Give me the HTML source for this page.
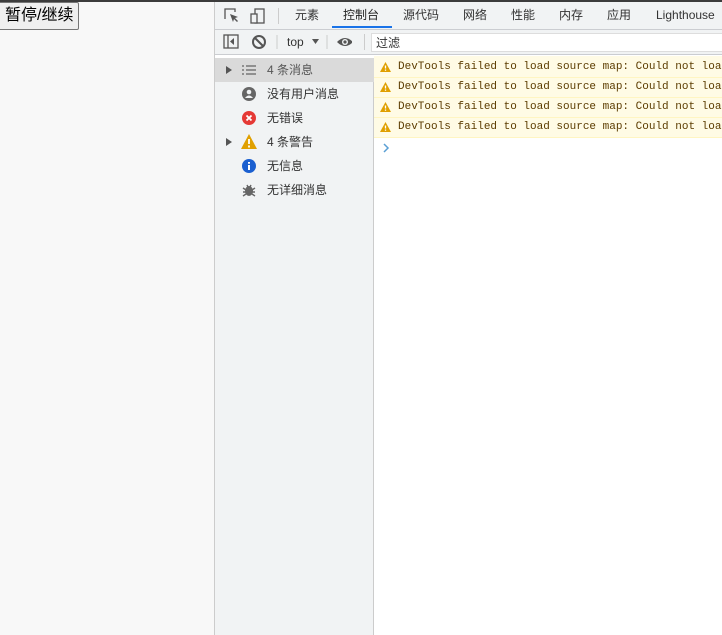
<!DOCTYPE html><html><head><style>
body{margin:0;width:722px;height:635px;overflow:hidden;background:#f8f8f8;font-family:"Liberation Sans","Noto Sans CJK SC",sans-serif;position:relative}
.a{position:absolute}
.btn{left:0;top:2px;height:26px;padding:0 5px;border:1px solid #767676;border-left:none;background:#efefef;font-size:16px;line-height:25px;color:#000;border-radius:0 2px 2px 0}
.tab{top:2px;height:27px;line-height:27px;font-size:12px;color:#333}
.side div{position:absolute;left:0;width:159px;height:24px;line-height:24px;font-size:12px;color:#333}
.side span{position:absolute;left:52px}
.row{left:374px;width:348px;height:19px;background:#fffbe5;border-bottom:1px solid #fff5c2;font-family:"Liberation Mono",monospace;font-size:11px;line-height:19px;color:#5c3c00;white-space:nowrap;overflow:hidden}
</style></head><body>
<div class="a" style="left:0;top:0;width:722px;height:2px;background:#3c3c3c"></div>
<div class="a btn">暂停/继续</div>
<div class="a" style="left:214px;top:2px;width:508px;height:633px;background:#fff;border-left:1px solid #ccc"></div>
<div class="a" style="left:215px;top:2px;width:507px;height:27px;background:#f1f3f4;border-bottom:1px solid #cbcdd1"></div>
<svg class="a" style="left:222px;top:6px" width="50" height="20"><path d="M3 13V3h10v3" fill="none" stroke="#555" stroke-width="1.3"/><path d="M8 8l8 3-3 1 3 3-1 1-3-3-1 3z" fill="#555"/><rect x="33" y="3" width="9" height="14" fill="none" stroke="#555" stroke-width="1.3"/><rect x="29" y="8" width="6" height="9" fill="#f1f3f4" stroke="#555" stroke-width="1.3"/></svg>
<div class="a" style="left:278px;top:8px;width:1px;height:16px;background:#ccc"></div>
<div class="a tab" style="left:295px">元素</div>
<div class="a tab" style="left:343px;color:#222">控制台</div>
<div class="a" style="left:332px;top:26px;width:60px;height:2px;background:#1a73e8"></div>
<div class="a tab" style="left:403px">源代码</div>
<div class="a tab" style="left:463px">网络</div>
<div class="a tab" style="left:511px">性能</div>
<div class="a tab" style="left:559px">内存</div>
<div class="a tab" style="left:607px">应用</div>
<div class="a tab" style="left:656px">Lighthouse</div>
<div class="a" style="left:215px;top:30px;width:507px;height:24px;background:#f1f3f4;border-bottom:1px solid #cbcdd1"></div>
<svg class="a" style="left:222px;top:33px" width="130" height="18"><rect x="2" y="2" width="14" height="13" fill="none" stroke="#555" stroke-width="1.3"/><line x1="6" y1="2" x2="6" y2="15" stroke="#555" stroke-width="1.3"/><path d="M12 5v7l-4-3.5z" fill="#555"/><circle cx="37" cy="9" r="6" fill="none" stroke="#555" stroke-width="2"/><line x1="33" y1="5" x2="41" y2="13" stroke="#555" stroke-width="2"/><line x1="55" y1="2" x2="55" y2="16" stroke="#ccc"/><path d="M90 6h7l-3.5 5z" fill="#555"/><line x1="105" y1="2" x2="105" y2="16" stroke="#ccc"/><path d="M115 9q8-8 16 0q-8 8-16 0z" fill="#555"/><circle cx="123" cy="9" r="3" fill="#f1f3f4"/><circle cx="123" cy="9" r="1.6" fill="#555"/></svg>
<div class="a" style="left:287px;top:30px;line-height:25px;font-size:12px;color:#333">top</div>
<div class="a" style="left:364px;top:34px;width:1px;height:16px;background:#ccc"></div>
<div class="a" style="left:371px;top:33px;width:351px;height:19px;background:#fff;border:1px solid #ddd;border-right:none;font-size:12px;line-height:19px;color:#333;box-sizing:border-box;padding-left:4px">过滤</div>
<div class="a side" style="left:215px;top:58px;width:158px;height:577px;background:#f1f3f4;border-right:1px solid #ccc">
<div style="top:0;background:#dadada"><svg class="a" style="left:11px;top:8px" width="6" height="8"><path d="M0 0l6 4-6 4z" fill="#555"/></svg><svg class="a" style="left:27px;top:7px" width="14" height="10"><path d="M0 1h2M4 1h10M0 5h2M4 5h10M0 9h2M4 9h10" stroke="#777" stroke-width="1.6"/></svg><span style="color:#555">4 条消息</span></div>
<div style="top:24px"><svg class="a" style="left:27px;top:5px" width="14" height="14"><circle cx="7" cy="7" r="7" fill="#666"/><circle cx="7" cy="5" r="2.3" fill="#f1f3f4"/><path d="M3 11q4-5 8 0" fill="#f1f3f4"/></svg><span>没有用户消息</span></div>
<div style="top:48px"><svg class="a" style="left:27px;top:5px" width="14" height="14"><circle cx="7" cy="7" r="7" fill="#e53935"/><path d="M4.5 4.5l5 5M9.5 4.5l-5 5" stroke="#fff" stroke-width="1.8"/></svg><span>无错误</span></div>
<div style="top:72px"><svg class="a" style="left:11px;top:8px" width="6" height="8"><path d="M0 0l6 4-6 4z" fill="#555"/></svg><svg class="a" style="left:26px;top:4px" width="16" height="15"><path d="M8 0l8 15H0z" fill="#e0a000"/><path d="M8 5v5M8 11.5v2" stroke="#fff" stroke-width="1.8"/></svg><span>4 条警告</span></div>
<div style="top:96px"><svg class="a" style="left:27px;top:5px" width="14" height="14"><circle cx="7" cy="7" r="7" fill="#1a5fd0"/><path d="M7 6v5M7 3v1.8" stroke="#fff" stroke-width="2"/></svg><span>无信息</span></div>
<div style="top:120px"><svg class="a" style="left:27px;top:5px" width="14" height="14"><ellipse cx="7" cy="8" rx="4" ry="5" fill="#666"/><path d="M1 5l3 2M13 5l-3 2M1 9h3M13 9h-3M1 13l3-2M13 13l-3-2M5 2l1 2M9 2l-1 2" stroke="#666" stroke-width="1.4"/></svg><span>无详细消息</span></div>
</div>
<div class="a" style="left:374px;top:56px;width:348px;height:3px;background:#fffbe5;border-bottom:1px solid #fff5c2"></div>
<div class="a row" style="top:58px"><svg style="position:absolute;left:6px;top:4px" width="11" height="10"><path d="M5.5 0l5.5 10H0z" fill="#e0a000"/><path d="M5.5 3.5v3M5.5 7.5v1.3" stroke="#fff" stroke-width="1.3"/></svg><span style="position:absolute;left:24px">DevTools failed to load source map: Could not load</span></div>
<div class="a row" style="top:78px"><svg style="position:absolute;left:6px;top:4px" width="11" height="10"><path d="M5.5 0l5.5 10H0z" fill="#e0a000"/><path d="M5.5 3.5v3M5.5 7.5v1.3" stroke="#fff" stroke-width="1.3"/></svg><span style="position:absolute;left:24px">DevTools failed to load source map: Could not load</span></div>
<div class="a row" style="top:98px"><svg style="position:absolute;left:6px;top:4px" width="11" height="10"><path d="M5.5 0l5.5 10H0z" fill="#e0a000"/><path d="M5.5 3.5v3M5.5 7.5v1.3" stroke="#fff" stroke-width="1.3"/></svg><span style="position:absolute;left:24px">DevTools failed to load source map: Could not load</span></div>
<div class="a row" style="top:118px"><svg style="position:absolute;left:6px;top:4px" width="11" height="10"><path d="M5.5 0l5.5 10H0z" fill="#e0a000"/><path d="M5.5 3.5v3M5.5 7.5v1.3" stroke="#fff" stroke-width="1.3"/></svg><span style="position:absolute;left:24px">DevTools failed to load source map: Could not load</span></div>
<svg class="a" style="left:382px;top:143px" width="8" height="10"><path d="M2 1l4 4-4 4" fill="none" stroke="#5a9fd4" stroke-width="1.5"/></svg>
</body></html>
